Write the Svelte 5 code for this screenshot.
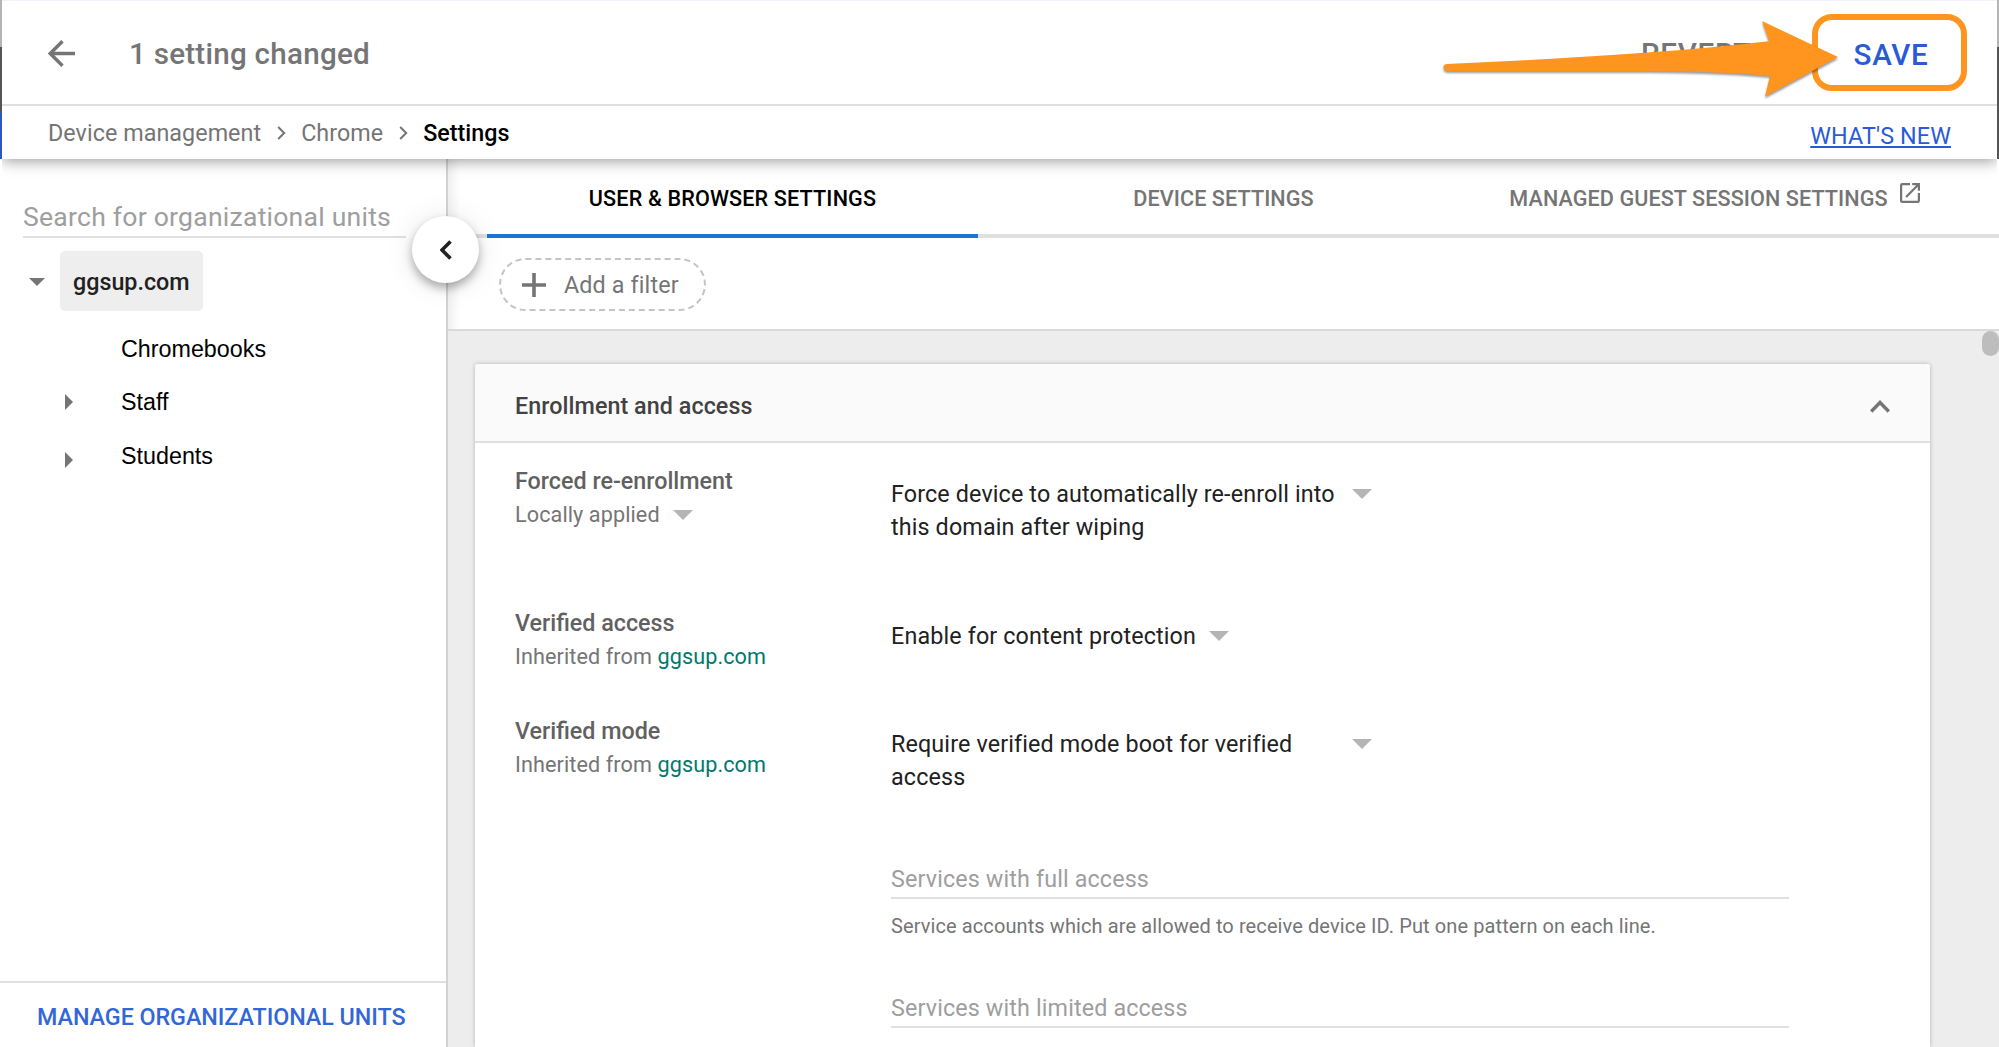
<script lang="ts">
    const tabs = [
        { label: "User & browser settings", external: false },
        { label: "Device settings", external: false },
        { label: "Managed guest session settings", external: true },
    ];
    let activeTab = $state(0);
    let expanded = $state(true);

    const units = [
        { name: "Chromebooks", hasChildren: false },
        { name: "Staff", hasChildren: true },
        { name: "Students", hasChildren: true },
    ];

    const settings = [
        {
            name: "Forced re-enrollment",
            inherited: "",
            value: "Force device to automatically re-enroll into this domain after wiping",
            fields: [],
        },
        {
            name: "Verified access",
            inherited: "ggsup.com",
            value: "Enable for content protection",
            fields: [],
        },
        {
            name: "Verified mode",
            inherited: "ggsup.com",
            value: "Require verified mode boot for verified access",
            fields: [
                {
                    label: "Services with full access",
                    hint: "Service accounts which are allowed to receive device ID. Put one pattern on each line.",
                },
                { label: "Services with limited access", hint: "" },
            ],
        },
    ];
</script>

{#snippet crumbArrow()}
    <svg class="crumb-arrow" width="9" height="14" viewBox="0 0 9 14">
        <path d="M1.2 1l6 6-6 6" />
    </svg>
{/snippet}

{#snippet caret()}
    <svg class="caret" width="20" height="10" viewBox="0 0 20 10">
        <path d="M0 0h20L10 10z" />
    </svg>
{/snippet}

<div class="app">
    <div class="top">
        <header>
            <div class="title-bar">
                <svg class="back" width="27" height="27" viewBox="0 0 27 27">
                    <path d="M27 13.5H2.5M14.5 1.2L2.2 13.5l12.3 12.3" />
                </svg>
                <h1>1 setting changed</h1>
                <button class="revert">Revert</button>
                <button class="save">Save</button>
            </div>
            <nav class="crumbs">
                <span>Device management</span>
                {@render crumbArrow()}
                <span>Chrome</span>
                {@render crumbArrow()}
                <span class="current">Settings</span>
                <a href="#new">WHAT'S NEW</a>
            </nav>
        </header>
        <svg class="pointer" width="410" height="90" viewBox="0 0 410 90">
            <path
                d="M7 54C118 49 228 43 329 31.3L322 11l76 36-73 39.5 5-20.5C290 62 240 61 190 61H8c-6 0-6-7-1-7z"
            />
        </svg>
    </div>

    <div class="body">
        <aside>
            <div class="search">Search for organizational units</div>
            <ul class="tree">
                <li class="root">
                    <svg class="down" width="16" height="8" viewBox="0 0 16 8">
                        <path d="M0 0h16L8 8z" />
                    </svg>
                    <span>ggsup.com</span>
                </li>
                {#each units as unit}
                    <li class="unit">
                        <span class="toggle">
                            {#if unit.hasChildren}
                                <svg width="8" height="16" viewBox="0 0 8 16">
                                    <path d="M0 0v16l8-8z" />
                                </svg>
                            {/if}
                        </span>
                        {unit.name}
                    </li>
                {/each}
            </ul>
            <div class="manage">Manage organizational units</div>
            <button class="collapse" aria-label="Collapse">
                <svg width="12" height="20" viewBox="0 0 12 20">
                    <path d="M10.5 1.5L2 10l8.5 8.5" />
                </svg>
            </button>
        </aside>

        <main>
            <div class="tabs">
                {#each tabs as tab, i}
                    <button
                        class="tab"
                        class:active={activeTab === i}
                        onclick={() => (activeTab = i)}
                    >
                        {tab.label}
                        {#if tab.external}
                            <svg class="external" width="20" height="20" viewBox="3 3 18 18">
                                <path
                                    d="M19 19H5V5h7V3H5a2 2 0 0 0-2 2v14a2 2 0 0 0 2 2h14c1.1 0 2-.9 2-2v-7h-2v7zM14 3v2h3.59l-9.83 9.83 1.41 1.41L19 6.41V10h2V3h-7z"
                                />
                            </svg>
                        {/if}
                    </button>
                {/each}
            </div>

            <div class="filters">
                <button class="chip">
                    <svg width="24" height="24" viewBox="0 0 24 24">
                        <path d="M12 0v24M0 12h24" />
                    </svg>
                    Add a filter
                </button>
            </div>

            <div class="content">
                <section class="card">
                    <div class="card-head">
                        <h2>Enrollment and access</h2>
                        <button
                            class="fold"
                            aria-label="Toggle section"
                            onclick={() => (expanded = !expanded)}
                        >
                            <svg width="20" height="13" viewBox="0 0 20 13">
                                <path d="M1.2 11.5L10 2.5l8.8 9" />
                            </svg>
                        </button>
                    </div>
                    {#if expanded}
                        <div class="rows">
                            {#each settings as s}
                                <div class="row">
                                    <div class="label">
                                        <h3>{s.name}</h3>
                                        {#if s.inherited}
                                            <p>Inherited from <a href="#ou">{s.inherited}</a></p>
                                        {:else}
                                            <p>Locally applied{@render caret()}</p>
                                        {/if}
                                    </div>
                                    <div class="value">
                                        <div class="select">
                                            <span>{s.value}</span>
                                            {@render caret()}
                                        </div>
                                        {#each s.fields as field}
                                            <div class="field">
                                                <div class="input">{field.label}</div>
                                                <div class="hint">{field.hint}</div>
                                            </div>
                                        {/each}
                                    </div>
                                </div>
                            {/each}
                        </div>
                    {/if}
                </section>
                <div class="thumb"></div>
            </div>
        </main>
    </div>
</div>

<style>
    :global(body) {
        background: #fff;
    }

    .app {
        width: 100%;
        height: 1047px;
        overflow: hidden;
        display: flex;
        flex-direction: column;
        font-family: Roboto, "Liberation Sans", sans-serif;
        font-size: 23.3px;
        letter-spacing: 0.14px;
        color: #212121;
    }

    button {
        border: 0;
        padding: 0;
        background: none;
        font: inherit;
        letter-spacing: inherit;
        color: inherit;
        cursor: pointer;
    }

    h1,
    h2,
    h3,
    p,
    ul {
        margin: 0;
        padding: 0;
        list-style: none;
    }

    svg {
        flex: none;
        fill: none;
        stroke: currentColor;
    }

    /* top bars, the dimmed page shows at both edges */
    .top {
        position: relative;
        z-index: 3;
        height: 159px;
        flex: none;
        background:
            linear-gradient(#b4b4b6 47px, #555 47px) right / 2px 100% no-repeat,
            linear-gradient(#b4b4b6 47px, #555 47px, #555 113px, #2a56c6 113px);
    }

    header {
        height: 159px;
        margin: 0 2px;
        background: #fff;
        box-shadow: 0 2px 14px rgba(0, 0, 0, 0.4);
        clip-path: inset(0 0 -30px 0);
    }

    .title-bar {
        display: flex;
        align-items: center;
        box-sizing: border-box;
        height: 106px;
        padding: 1px 30px 0 46px;
        border-top: 1px solid #f1f2fa;
        border-bottom: 2px solid #e0e0e0;
        color: #757575;
    }

    .back {
        stroke-width: 3.4;
    }

    h1 {
        flex: 1;
        margin: 2px 0 0 54px;
        font-size: 29.6px;
        font-weight: 500;
        letter-spacing: 0.25px;
    }

    .revert,
    .save {
        font-size: 29.6px;
        font-weight: 500;
        letter-spacing: 0.7px;
        text-transform: uppercase;
    }

    .revert {
        padding-top: 2px;
    }

    .save {
        box-sizing: border-box;
        width: 155px;
        height: 77px;
        margin: -1px 0 0 60px;
        padding: 4px 0 0 3px;
        border: 6px solid #ff951e;
        border-radius: 20px;
        color: #2a5bd7;
    }

    .pointer {
        position: absolute;
        top: 10px;
        left: 1440px;
        overflow: visible;
        stroke: none;
        fill: #ff951e;
        filter: drop-shadow(0 2px 1px rgba(0, 0, 0, 0.4));
    }

    .crumbs {
        display: flex;
        align-items: center;
        height: 53px;
        padding: 0 46px;
        letter-spacing: 0.06px;
        color: #757575;
    }

    .crumb-arrow {
        margin: 0 15.5px;
        stroke-width: 2;
    }

    .crumbs .current {
        color: #000;
        font-weight: 500;
        letter-spacing: 0;
    }

    .crumbs a {
        margin-left: auto;
        margin-top: 6px;
        letter-spacing: 0.14px;
        color: #2a5bd7;
    }

    .body {
        flex: 1;
        display: flex;
        min-height: 0;
    }

    /* organizational units */
    aside {
        position: relative;
        z-index: 2;
        box-sizing: border-box;
        width: 448px;
        flex: none;
        display: flex;
        flex-direction: column;
        border-right: 2px solid #d2d2d2;
        background: #fff;
    }

    .search {
        width: 383px;
        height: 37px;
        margin: 40px 0 0 23px;
        border-bottom: 2px solid #e0e0e0;
        font-size: 26.6px;
        letter-spacing: 0.22px;
        line-height: 36px;
        color: #9e9e9e;
    }

    .root {
        display: flex;
        align-items: center;
        margin: 13px 0 11px 29px;
    }

    .root span {
        margin-left: 15px;
        padding: 2px 13px 0;
        border-radius: 5px;
        background: #eee;
        line-height: 58px;
        font-weight: 500;
        letter-spacing: 0;
    }

    .down {
        margin-top: 2px;
    }

    .down,
    .toggle svg {
        stroke: none;
        fill: #757575;
    }

    .unit {
        display: flex;
        align-items: center;
        height: 54px;
        padding-left: 65px;
        font-family: "Liberation Sans", Arial, sans-serif;
        letter-spacing: 0;
        color: #000;
    }

    /* the sub-pixel line between Staff and its neighbours */
    .unit:nth-child(3) {
        height: 52px;
    }

    .unit:nth-child(4) {
        height: 56px;
    }

    .toggle {
        display: flex;
        width: 56px;
    }

    .unit:last-child .toggle {
        padding-top: 7px;
    }

    .manage {
        margin-top: auto;
        height: 64px;
        border-top: 2px solid #e0e0e0;
        padding-left: 37px;
        line-height: 68px;
        letter-spacing: -0.05px;
        color: #3367d6;
        font-weight: 500;
        text-transform: uppercase;
    }

    .collapse {
        position: absolute;
        top: 57px;
        right: -33px;
        display: flex;
        align-items: center;
        justify-content: center;
        width: 67px;
        height: 67px;
        border-radius: 50%;
        background: #fff;
        box-shadow:
            0 5px 10px rgba(0, 0, 0, 0.3),
            0 2px 30px rgba(0, 0, 0, 0.1);
    }

    .collapse svg {
        stroke-width: 3.6;
    }

    /* settings */
    main {
        flex: 1;
        min-width: 0;
        display: flex;
        flex-direction: column;
    }

    .tabs,
    .filters {
        background: linear-gradient(to right, #f0f0f0, #fff 12px);
    }

    .tabs {
        display: grid;
        grid-template-columns: repeat(3, 491px);
        height: 79px;
        padding-left: 39px;
        box-shadow: inset 0 -4px #e0e0e0;
    }

    .tab {
        display: flex;
        justify-content: center;
        padding-top: 24px;
        font-size: 21.6px;
        font-weight: 500;
        letter-spacing: 0.08px;
        line-height: 31px;
        color: #757575;
        text-transform: uppercase;
        white-space: nowrap;
    }

    .tab.active {
        box-shadow: inset 0 -4px #1976d2;
        letter-spacing: 0.14px;
        color: #000;
    }

    .external {
        margin-left: 12px;
        stroke: none;
        fill: currentColor;
    }

    .filters {
        box-sizing: border-box;
        height: 93px;
        padding: 20px 0 0 51px;
        border-bottom: 2px solid #dadada;
    }

    .chip {
        display: flex;
        align-items: center;
        box-sizing: border-box;
        width: 207px;
        height: 53px;
        padding-left: 21px;
        border: 2px dashed #c4c4c4;
        border-radius: 27px;
        color: #757575;
    }

    .chip svg {
        margin-right: 18px;
        stroke-width: 3.6;
    }

    .content {
        flex: 1;
        min-height: 0;
        display: flex;
        justify-content: space-between;
        background: #ededed;
    }

    .card {
        width: 1455px;
        margin: 33px 0 0 27px;
        border-radius: 3px 3px 0 0;
        background: #fff;
        box-shadow: 0 0 4px rgba(0, 0, 0, 0.25);
    }

    .thumb {
        width: 17px;
        height: 25px;
        border-radius: 9px;
        background: #bdbdbd;
    }

    .card-head {
        display: flex;
        align-items: center;
        justify-content: space-between;
        box-sizing: border-box;
        height: 79px;
        padding: 7px 40px 0;
        border-bottom: 2px solid #e0e0e0;
        border-radius: 3px 3px 0 0;
        background: #fafafa;
    }

    h2 {
        font-size: 23.3px;
        font-weight: 500;
        letter-spacing: 0.06px;
        color: #424242;
    }

    .fold {
        display: flex;
        color: #757575;
    }

    .fold svg {
        stroke-width: 3.4;
    }

    .rows {
        padding: 21px 40px 0;
    }

    .row {
        display: grid;
        grid-template-columns: 376px 898px;
        min-height: 108px;
    }

    .row:first-child {
        min-height: 142px;
    }

    h3 {
        font-size: 23.3px;
        font-weight: 500;
        letter-spacing: 0;
        line-height: 34px;
        color: #616161;
    }

    .label p {
        display: flex;
        align-items: center;
        font-size: 21.6px;
        letter-spacing: 0.1px;
        line-height: 33px;
        color: #757575;
        white-space: pre;
    }

    .label a {
        color: #00796b;
        text-decoration: none;
    }

    .caret {
        stroke: none;
        fill: #b5b5b5;
    }

    .label .caret {
        margin-left: 13px;
    }

    .value {
        padding-top: 14px;
    }

    .select {
        display: flex;
        line-height: 33.4px;
    }

    .select span {
        max-width: 448px;
    }

    .select .caret {
        margin: 11px 0 0 13px;
    }

    .field {
        height: 129px;
    }

    .select + .field {
        margin-top: 66px;
    }

    .input {
        border-bottom: 2px solid #e0e0e0;
        line-height: 36px;
        color: #9e9e9e;
    }

    .hint {
        margin-top: 14px;
        font-size: 20px;
        letter-spacing: 0.1px;
        line-height: 26px;
        color: #757575;
    }
</style>
